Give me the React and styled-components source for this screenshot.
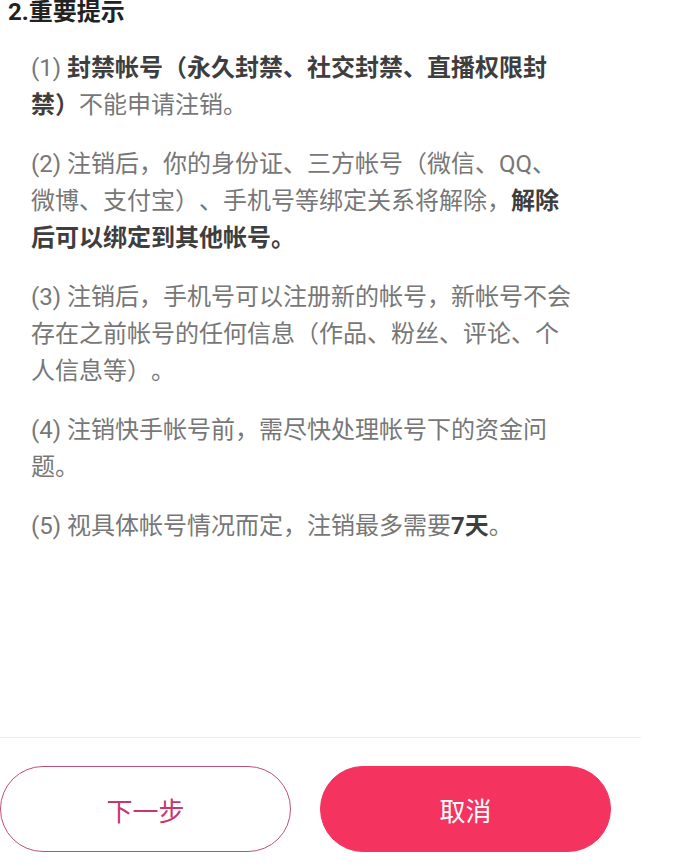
// 注销帐号 - 重要提示页

import React from "react";
import styled, {createGlobalStyle} from "styled-components";

const GlobalStyle = createGlobalStyle`
    html, body {
        margin: 0;
        padding: 0;
        background: #fff;
    }
    body {
        font-family: Roboto, "Noto Sans CJK SC", "Noto Sans", sans-serif;
    }
`

const Page = styled.div`
    display: flex;
    flex-direction: column;
    height: 100vh;
    width: 100%;
    overflow: hidden;
`

const Content = styled.div`
    flex: 1;
`

const Title = styled.h2`
    margin: 0 0 26px 8px;
    font-size: 24px;
    line-height: 24px;
    font-weight: 700;
    color: #222;
`

const List = styled.div`
    width: 540px;
    padding-left: 31px;
    display: flex;
    flex-direction: column;
    gap: 22px;
`

const Item = styled.p`
    margin: 0;
    font-size: 24px;
    line-height: 37px;
    color: #777;
    text-spacing-trim: space-all;

    b {
        font-weight: 700;
        color: #3e3e3e;
    }
`

const Footer = styled.div`
    width: 641px;
    border-top: 1px solid #ececec;
    padding: 28px 0 14px;
    display: grid;
    grid-template-columns: 291px 291px;
    column-gap: 29px;
`

const Button = styled.button`
    height: 86px;
    border-radius: 43px;
    font-family: inherit;
    font-size: 26px;
    border: 1px solid ${props => props.primary ? "#f5335f" : "#bd4f7b"};
    background: ${props => props.primary ? "#f5335f" : "#fff"};
    color: ${props => props.primary ? "#fff" : "#c8366b"};
    cursor: pointer;
`

function App() {
    return (
        <Page>
            <GlobalStyle />
            <Content>
                <Title>2.重要提示</Title>
                <List>
                    <Item>(1) <b>封禁帐号（永久封禁、社交封禁、直播权限封禁）</b>不能申请注销。</Item>
                    <Item>(2) 注销后，你的身份证、三方帐号（微信、QQ、微博、支付宝）、手机号等绑定关系将解除，<b>解除后可以绑定到其他帐号。</b></Item>
                    <Item>(3) 注销后，手机号可以注册新的帐号，新帐号不会存在之前帐号的任何信息（作品、粉丝、评论、个人信息等）。</Item>
                    <Item>(4) 注销快手帐号前，需尽快处理帐号下的资金问题。</Item>
                    <Item>(5) 视具体帐号情况而定，注销最多需要<b>7天</b>。</Item>
                </List>
            </Content>
            <Footer>
                <Button>下一步</Button>
                <Button primary>取消</Button>
            </Footer>
        </Page>
    )
}

export default App
